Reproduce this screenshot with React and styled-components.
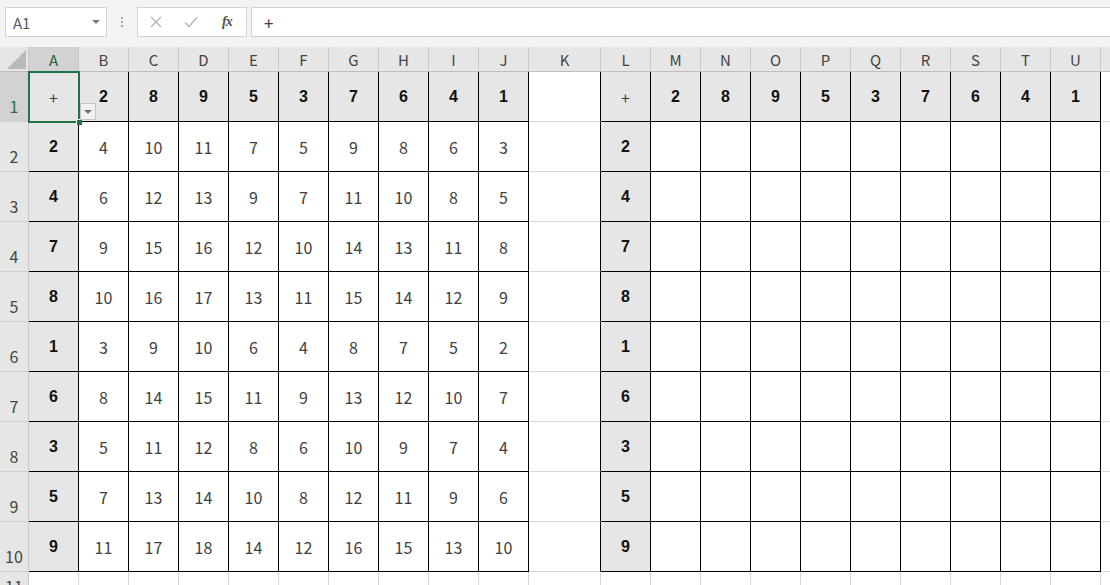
import React from 'react';
import styled, { createGlobalStyle } from 'styled-components';

const GlobalStyle = createGlobalStyle`
  html, body {
    margin: 0;
    padding: 0;
    background: #ffffff;
    overflow: hidden;
  }
`;

const TOP = [2, 8, 9, 5, 3, 7, 6, 4, 1];
const LEFT = [2, 4, 7, 8, 1, 6, 3, 5, 9];
const COLS = ['A', 'B', 'C', 'D', 'E', 'F', 'G', 'H', 'I', 'J', 'K', 'L', 'M', 'N', 'O', 'P', 'Q', 'R', 'S', 'T', 'U', ''];

const BOOK_FONT = `"Noto Sans CJK JP", "Noto Sans", sans-serif`;
const FILL = '#e7e6e6';
const GRID = '#d9d9d9';
const INK = '#000000';

const Window = styled.div`
  width: 1110px;
  height: 585px;
  display: flex;
  flex-direction: column;
  background: #f3f3f3;
  font-family: ${BOOK_FONT};
  overflow: hidden;
`;

// formula bar
const FormulaBar = styled.div`
  height: 47px;
  flex: none;
  display: flex;
  align-items: flex-start;
  padding: 7px 0 0 5px;
  box-sizing: border-box;
`;

const NameBox = styled.div`
  width: 102px;
  height: 30px;
  box-sizing: border-box;
  background: #fff;
  border: 1px solid #d2d2d2;
  display: flex;
  align-items: center;
  justify-content: space-between;
  padding: 0 6px 0 7px;
  font-size: 15px;
  color: #595959;
`;

const Caret = styled.span`
  width: 0;
  height: 0;
  border-left: 4px solid transparent;
  border-right: 4px solid transparent;
  border-top: 4px solid ${p => p.$color || '#7a7a7a'};
`;

const Grip = styled.div`
  width: 30px;
  height: 30px;
  display: flex;
  flex-direction: column;
  align-items: center;
  justify-content: center;
  gap: 2px;
  span {
    width: 2px;
    height: 2px;
    background: #a8a8a8;
  }
`;

const ButtonBox = styled.div`
  width: 110px;
  height: 30px;
  box-sizing: border-box;
  background: #fff;
  border: 1px solid #d2d2d2;
  display: flex;
  align-items: center;
  padding-left: 12px;
  gap: 22px;
`;

const Fx = styled.span`
  font-family: "Liberation Serif", "DejaVu Serif", serif;
  font-style: italic;
  font-weight: bold;
  font-size: 14px;
  color: #505050;
  margin-left: 2px;
  letter-spacing: -1px;
`;

const FormulaInput = styled.div`
  flex: 1;
  height: 30px;
  margin-left: 4px;
  box-sizing: border-box;
  background: #fff;
  border: 1px solid #d2d2d2;
  border-right: none;
  display: flex;
  align-items: center;
  padding-left: 12px;
  font-size: 17px;
  color: #404040;
`;

// sheet
const Sheet = styled.div`
  position: relative;
  flex: 1;
  display: grid;
  grid-template-columns: 29px repeat(10, 50px) 72px repeat(10, 50px) 60px;
  grid-template-rows: 25px repeat(10, 50px) 25px;
  background: #fff;
`;

const Corner = styled.div`
  background: #e6e6e6;
  border-right: 1px solid #c8c8c8;
  border-bottom: 1px solid #bdbdbd;
  display: flex;
  align-items: flex-end;
  justify-content: flex-end;
  padding: 0 2px 2px 0;
  box-sizing: border-box;
`;

const ColHead = styled.div`
  background: ${p => (p.$active ? '#d2d2d2' : '#e6e6e6')};
  border-right: 1px solid #c8c8c8;
  border-bottom: 1px solid ${p => (p.$active ? '#217346' : '#bdbdbd')};
  box-sizing: border-box;
  display: flex;
  align-items: center;
  justify-content: center;
  font-size: 15px;
  color: ${p => (p.$active ? '#1e5e3a' : '#444')};
`;

const RowHead = styled.div`
  background: ${p => (p.$active ? '#d2d2d2' : '#e6e6e6')};
  border-right: 1px solid ${p => (p.$active ? '#217346' : '#c8c8c8')};
  border-bottom: 1px solid #d0d0d0;
  box-sizing: border-box;
  display: flex;
  align-items: ${p => (p.$short ? 'flex-start' : 'flex-end')};
  justify-content: center;
  padding-bottom: ${p => (p.$short ? '0' : '5px')};
  padding-top: ${p => (p.$short ? '4px' : '0')};
  line-height: 20px;
  font-size: 16px;
  color: ${p => (p.$active ? '#2b6b47' : '#444')};
  overflow: hidden;
`;

const Cell = styled.div`
  background: ${p => (p.$fill ? FILL : '#fff')};
  border-right: 1px solid ${p => p.$right || GRID};
  border-bottom: 1px solid ${p => p.$bottom || GRID};
  box-sizing: border-box;
  display: flex;
  align-items: center;
  justify-content: center;
  font-family: ${p => (p.$bold ? `"Liberation Sans", Arial, sans-serif` : BOOK_FONT)};
  font-weight: ${p => (p.$bold ? 700 : 400)};
  font-size: ${p => (p.$bold ? '16px' : '16px')};
  color: ${p => (p.$bold ? '#111' : '#404040')};
`;

const Selection = styled.div`
  position: absolute;
  left: 28px;
  top: 24px;
  width: 52px;
  height: 52px;
  box-sizing: border-box;
  border: 2px solid #217346;
  pointer-events: none;
`;

const FillHandle = styled.div`
  position: absolute;
  right: -4px;
  bottom: -4px;
  width: 5px;
  height: 5px;
  background: #217346;
  border: 1px solid #fff;
  border-width: 1px 0 0 1px;
`;

const ListButton = styled.div`
  position: absolute;
  left: 80px;
  top: 56px;
  width: 16px;
  height: 17px;
  box-sizing: border-box;
  background: #f2f2f2;
  border: 1px solid #c6c6c6;
  display: flex;
  align-items: center;
  justify-content: center;
`;

function headerValue(r, c) {
  // r, c are 0-based inside a table block of 10x10
  if (r === 0 && c === 0) return '+';
  if (r === 0) return TOP[c - 1];
  if (c === 0) return LEFT[r - 1];
  return null;
}

function renderCell(r, colIndex) {
  // r: 0..9 for sheet rows 1..10, colIndex: 0..21
  const key = `${r}-${colIndex}`;
  if (colIndex < 10) {
    const c = colIndex;
    const head = headerValue(r, c);
    const isHead = r === 0 || c === 0;
    const value = head !== null ? head : TOP[c - 1] + LEFT[r - 1];
    return (
      <Cell key={key} $fill={isHead} $bold={isHead && value !== '+'} $right={INK} $bottom={INK}>
        {value}
      </Cell>
    );
  }
  if (colIndex === 10) {
    return <Cell key={key} $right={INK} />;
  }
  if (colIndex < 21) {
    const c = colIndex - 11;
    const head = headerValue(r, c);
    const isHead = r === 0 || c === 0;
    return (
      <Cell key={key} $fill={isHead} $bold={isHead && head !== '+'} $right={INK} $bottom={INK}>
        {head}
      </Cell>
    );
  }
  return <Cell key={key} />;
}

export default function App() {
  const rows = Array.from({ length: 10 }, (_, i) => i);
  return (
    <Window>
      <GlobalStyle />
      <FormulaBar>
        <NameBox>
          <span>A1</span>
          <Caret />
        </NameBox>
        <Grip>
          <span />
          <span />
          <span />
        </Grip>
        <ButtonBox>
          <svg width="12" height="12" viewBox="0 0 12 12">
            <path d="M1 1 L11 11 M11 1 L1 11" stroke="#b4b4b4" strokeWidth="1.3" fill="none" />
          </svg>
          <svg width="14" height="12" viewBox="0 0 14 12">
            <path d="M1 6.5 L5 10.5 L13 1.5" stroke="#b4b4b4" strokeWidth="1.5" fill="none" />
          </svg>
          <Fx>fx</Fx>
        </ButtonBox>
        <FormulaInput>+</FormulaInput>
      </FormulaBar>

      <Sheet>
        <Corner>
          <svg width="19" height="19" viewBox="0 0 19 19">
            <polygon points="19,0 19,19 0,19" fill="#b9b9b9" />
          </svg>
        </Corner>
        {COLS.map((name, i) => (
          <ColHead key={`h${i}`} $active={i === 0}>
            {name}
          </ColHead>
        ))}

        {rows.map(r => (
          <React.Fragment key={`r${r}`}>
            <RowHead $active={r === 0}>{r + 1}</RowHead>
            {COLS.map((_, c) => renderCell(r, c))}
          </React.Fragment>
        ))}

        <RowHead $short>11</RowHead>
        {COLS.map((_, c) => (
          <Cell key={`last${c}`} />
        ))}

        <Selection>
          <FillHandle />
        </Selection>
        <ListButton>
          <Caret $color="#6e6e6e" />
        </ListButton>
      </Sheet>
    </Window>
  );
}
